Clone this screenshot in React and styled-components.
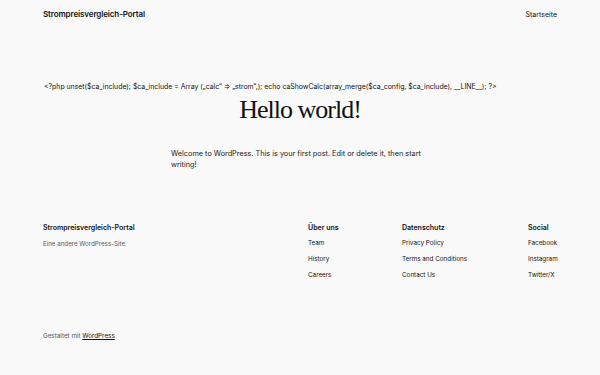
import React from 'react';
import styled, { createGlobalStyle } from 'styled-components';

const GlobalStyle = createGlobalStyle`
  html, body {
    margin: 0;
    padding: 0;
    background: #f9f9f9;
  }
  body {
    font-family: Inter, "Liberation Sans", sans-serif;
    color: #111;
  }
`

const Page = styled.div`
  width: 600px;
  height: 375px;
  display: flex;
  flex-direction: column;
  background: #f9f9f9;
`

const Header = styled.header`
  display: flex;
  justify-content: space-between;
  align-items: center;
  padding: 8px 43px 0 43px;
  height: 12px;
`

const SiteTitle = styled.a`
  font-size: 8px;
  font-weight: 600;
  color: #111;
  text-decoration: none;
  letter-spacing: -0.1px;
`

const NavLink = styled.a`
  font-size: 7px;
  color: #111;
  text-decoration: none;
`

const Main = styled.main`
  display: flex;
  flex-direction: column;
  align-items: center;
  padding-top: 62px;
`

const PhpLine = styled.p`
  align-self: flex-start;
  margin: 0 0 0 44px;
  font-size: 6.9px;
  line-height: 10px;
  color: #111;
  white-space: nowrap;
`

const Title = styled.h1`
  margin: 2px 0 0 0;
  font-family: "Liberation Serif", serif;
  font-weight: 400;
  font-size: 26px;
  line-height: 32px;
  letter-spacing: -1px;
  color: #111;
`

const Content = styled.p`
  width: 258px;
  margin: 22px 0 0 0;
  font-size: 7.3px;
  line-height: 11px;
  color: #222;
`

const Footer = styled.footer`
  display: flex;
  padding: 53px 43px 0 43px;
`

const Brand = styled.div`
  flex: 1;
`

const FooterTitle = styled.div`
  font-size: 7px;
  font-weight: 600;
  line-height: 10px;
  color: #111;
`

const Tagline = styled.div`
  margin-top: 7px;
  font-size: 6.2px;
  color: #555;
`

const Column = styled.div`
  width: ${props => props.$w}px;
  display: flex;
  flex-direction: column;
  gap: 6px;
`

const ColTitle = styled.div`
  font-size: 7px;
  font-weight: 600;
  line-height: 10px;
  color: #111;
  margin-bottom: -1px;
`

const ColLink = styled.a`
  font-size: 6.3px;
  line-height: 10px;
  color: #111;
  text-decoration: none;
`

const Credit = styled.div`
  margin: 52px 0 0 43px;
  font-size: 6.3px;
  color: #555;

  a {
    color: #111;
    text-decoration: underline;
  }
`

const columns = [
  { title: 'Über uns', w: 94, links: ['Team', 'History', 'Careers'] },
  { title: 'Datenschutz', w: 126, links: ['Privacy Policy', 'Terms and Conditions', 'Contact Us'] },
  { title: 'Social', w: 29, links: ['Facebook', 'Instagram', 'Twitter/X'] },
]

export default function App() {
  return (
    <Page>
      <GlobalStyle />
      <Header>
        <SiteTitle href="#">Strompreisvergleich-Portal</SiteTitle>
        <NavLink href="#">Startseite</NavLink>
      </Header>
      <Main>
        <PhpLine>
          {'<?php unset($ca_include); $ca_include = Array („calc“ => „strom“,); echo caShowCalc(array_merge($ca_config, $ca_include), __LINE__); ?>'}
        </PhpLine>
        <Title>Hello world!</Title>
        <Content>
          Welcome to WordPress. This is your first post. Edit or delete it, then start writing!
        </Content>
      </Main>
      <Footer>
        <Brand>
          <FooterTitle>Strompreisvergleich-Portal</FooterTitle>
          <Tagline>Eine andere WordPress-Site.</Tagline>
        </Brand>
        {columns.map(col => (
          <Column key={col.title} $w={col.w}>
            <ColTitle>{col.title}</ColTitle>
            {col.links.map(l => <ColLink key={l} href="#">{l}</ColLink>)}
          </Column>
        ))}
      </Footer>
      <Credit>
        Gestaltet mit <a href="#">WordPress</a>
      </Credit>
    </Page>
  );
}
